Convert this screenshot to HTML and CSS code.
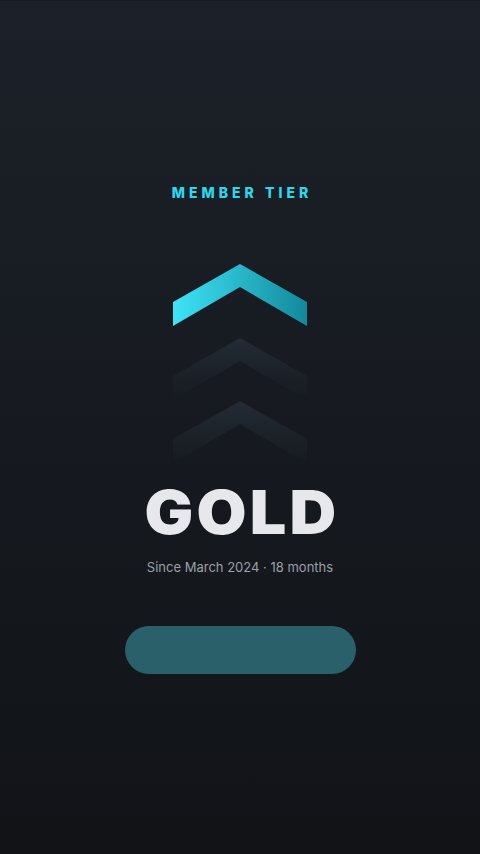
FILE: index.html
```html
<!DOCTYPE html>
<html lang="en">
<head>
<meta charset="utf-8">
<link rel="stylesheet" href="styles.css">
</head>
<body>
<main class="screen">
  <div class="label">MEMBER TIER</div>
  <div class="chevrons">
    <svg class="chev chev-active" width="134" height="62" viewBox="0 0 134 62">
      <defs>
        <linearGradient id="ga" x1="0" y1="0" x2="1" y2="0">
          <stop offset="0" stop-color="#3fe3f7"/>
          <stop offset="1" stop-color="#12899b"/>
        </linearGradient>
      </defs>
      <polygon points="0,38 67,0 134,38 134,62 67,23 0,62" fill="url(#ga)"/>
    </svg>
    <svg class="chev chev-dim" width="134" height="62" viewBox="0 0 134 62">
      <defs>
        <linearGradient id="gb" x1="0" y1="0" x2="0" y2="1">
          <stop offset="0" stop-color="#242b34"/>
          <stop offset="1" stop-color="#161a20"/>
        </linearGradient>
      </defs>
      <polygon points="0,38 67,0 134,38 134,62 67,23 0,62" fill="url(#gb)"/>
    </svg>
    <svg class="chev chev-dim" width="134" height="62" viewBox="0 0 134 62">
      <polygon points="0,38 67,0 134,38 134,62 67,23 0,62" fill="url(#gb)"/>
    </svg>
  </div>
  <h1 class="tier">GOLD</h1>
  <p class="since">Since March 2024 · 18 months</p>
  <div class="button"></div>
</main>
</body>
</html>
```
FILE: styles.css
```css
html, body {
  margin: 0;
  padding: 0;
}
body {
  width: 480px;
  height: 854px;
  background: linear-gradient(180deg, #1c2129 0%, #161a20 50%, #111317 100%);
  border-top: 1px solid #161b21;
  box-sizing: border-box;
  overflow: hidden;
  font-family: Inter, "Liberation Sans", sans-serif;
}
.screen {
  display: flex;
  flex-direction: column;
  align-items: center;
  padding-top: 184px;
}
.label {
  color: #2fd6ef;
  font-size: 14px;
  font-weight: 800;
  letter-spacing: 4px;
  line-height: 16px;
  margin-left: 4px;
}
.chevrons {
  display: flex;
  flex-direction: column;
  align-items: center;
  margin-top: 63px;
}
.chev {
  display: block;
}
.chev-dim {
  margin-top: 1px;
}
.chev-active {
  margin-bottom: 11px;
}
.tier {
  margin: 18px 0 0 3px;
  color: #e6e8ec;
  font-size: 61px;
  font-weight: 900;
  line-height: 62px;
  letter-spacing: 3px;
  transform: scaleX(1.06);
}
.since {
  margin: 16px 0 0;
  color: #9aa0a8;
  font-size: 13px;
  line-height: 16px;
}
.button {
  margin-top: 51px;
  width: 231px;
  height: 48px;
  border-radius: 24px;
  background: #2a606a;
}
```
